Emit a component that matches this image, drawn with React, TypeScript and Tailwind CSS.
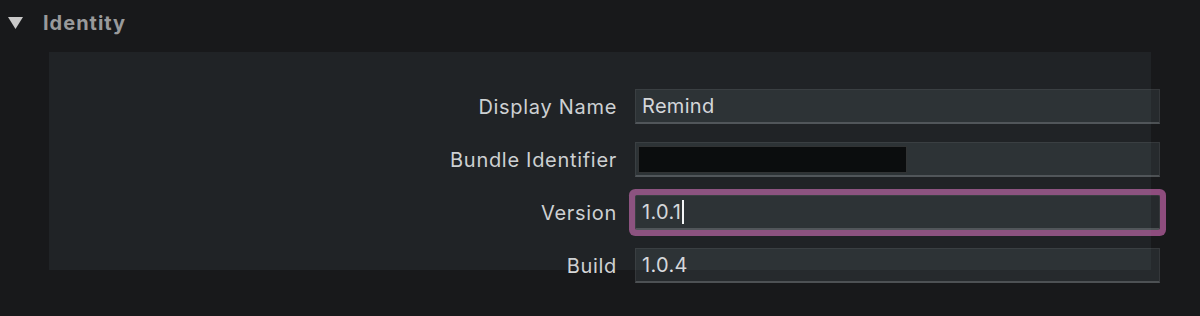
import { type ReactNode } from 'react';

type Row = {
  label: string;
  value?: string;
  redacted?: boolean;
  focused?: boolean;
};

const ROWS: Row[] = [
  { label: 'Display Name', value: 'Remind' },
  { label: 'Bundle Identifier', redacted: true },
  { label: 'Version', value: '1.0.1', focused: true },
  { label: 'Build', value: '1.0.4' },
];

function Field({ row }: { row: Row }) {
  let inner: ReactNode = null;
  if (row.redacted) {
    inner = <div className="ml-[2px] h-[27px] w-[269px] border border-[#2a2a2a] bg-black" />;
  } else {
    inner = (
      <span className="flex items-center pl-[6px] text-[20px] tracking-[0.3px] text-[#dedfe0]">
        {row.value}
        {row.focused ? <span className="ml-[1px] h-[24px] w-[2px] bg-white" /> : null}
      </span>
    );
  }

  return (
    <div
      className={`flex h-[35px] w-[525px] items-center border border-[#34373a] border-b-2 border-b-[#4d5154] bg-[#262a2d] ${
        row.focused ? 'rounded-[2px] shadow-[0_0_0_6px_#8e4d7e]' : ''
      }`}
    >
      {inner}
    </div>
  );
}

export default function App() {
  return (
    <div
      className="h-[316px] w-[1200px] overflow-hidden bg-[#18191b]"
      style={{ fontFamily: 'Inter, "Noto Sans", sans-serif' }}
    >
      {/* Section header */}
      <div className="flex h-[46px] items-center pb-[1px]">
        <svg width="15" height="12" viewBox="0 0 15 12" className="ml-[8px]">
          <path d="M0 0 H15 L7.5 12 Z" fill="#c9c9c9" />
        </svg>
        <span className="ml-[20px] text-[20px] font-bold tracking-[1px] text-[#999a9b]">Identity</span>
      </div>

      <div className="relative">
        {/* Form rows */}
        <div className="flex flex-col gap-[18px] pt-[43px]">
          {ROWS.map((row) => (
            <div key={row.label} className="flex items-center">
              <span className="w-[617px] text-right text-[20px] tracking-[0.7px] text-[#d6d7d8]">{row.label}</span>
              <div className="ml-[18px]">
                <Field row={row} />
              </div>
            </div>
          ))}
        </div>

        {/* Inspector panel tint lying over the rows */}
        <div className="pointer-events-none absolute left-[49px] top-[6px] h-[218px] w-[1102px] bg-[rgba(120,140,150,0.09)]" />
      </div>
    </div>
  );
}
